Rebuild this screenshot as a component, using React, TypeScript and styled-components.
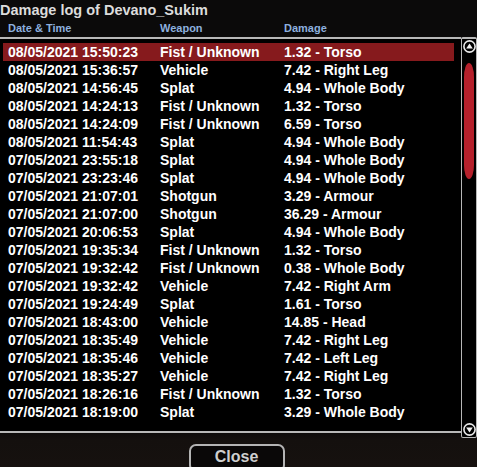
import React from "react";
import styled, { createGlobalStyle } from "styled-components";

const Global = createGlobalStyle`
  html, body { margin: 0; padding: 0; background: #0b0a0a; }
  body { font-family: "Liberation Sans", Arial, sans-serif; }
`;

type Entry = { date: string; weapon: string; damage: string };

const entries: Entry[] = [
  { date: "08/05/2021 15:50:23", weapon: "Fist / Unknown", damage: "1.32 - Torso" },
  { date: "08/05/2021 15:36:57", weapon: "Vehicle", damage: "7.42 - Right Leg" },
  { date: "08/05/2021 14:56:45", weapon: "Splat", damage: "4.94 - Whole Body" },
  { date: "08/05/2021 14:24:13", weapon: "Fist / Unknown", damage: "1.32 - Torso" },
  { date: "08/05/2021 14:24:09", weapon: "Fist / Unknown", damage: "6.59 - Torso" },
  { date: "08/05/2021 11:54:43", weapon: "Splat", damage: "4.94 - Whole Body" },
  { date: "07/05/2021 23:55:18", weapon: "Splat", damage: "4.94 - Whole Body" },
  { date: "07/05/2021 23:23:46", weapon: "Splat", damage: "4.94 - Whole Body" },
  { date: "07/05/2021 21:07:01", weapon: "Shotgun", damage: "3.29 - Armour" },
  { date: "07/05/2021 21:07:00", weapon: "Shotgun", damage: "36.29 - Armour" },
  { date: "07/05/2021 20:06:53", weapon: "Splat", damage: "4.94 - Whole Body" },
  { date: "07/05/2021 19:35:34", weapon: "Fist / Unknown", damage: "1.32 - Torso" },
  { date: "07/05/2021 19:32:42", weapon: "Fist / Unknown", damage: "0.38 - Whole Body" },
  { date: "07/05/2021 19:32:42", weapon: "Vehicle", damage: "7.42 - Right Arm" },
  { date: "07/05/2021 19:24:49", weapon: "Splat", damage: "1.61 - Torso" },
  { date: "07/05/2021 18:43:00", weapon: "Vehicle", damage: "14.85 - Head" },
  { date: "07/05/2021 18:35:49", weapon: "Vehicle", damage: "7.42 - Right Leg" },
  { date: "07/05/2021 18:35:46", weapon: "Vehicle", damage: "7.42 - Left Leg" },
  { date: "07/05/2021 18:35:27", weapon: "Vehicle", damage: "7.42 - Right Leg" },
  { date: "07/05/2021 18:26:16", weapon: "Fist / Unknown", damage: "1.32 - Torso" },
  { date: "07/05/2021 18:19:00", weapon: "Splat", damage: "3.29 - Whole Body" },
];

const Window = styled.div`
  width: 477px;
  height: 467px;
  overflow: hidden;
  display: flex;
  flex-direction: column;
  background: linear-gradient(#0b0a0a 0px, #0b0a0a 430px, #14100e 440px, #16110f 467px);
`;

const Title = styled.div`
  height: 20px;
  line-height: 20px;
  font-size: 14.5px;
  font-weight: bold;
  color: #dcdcdc;
  white-space: nowrap;
`;

const Columns = styled.div`
  display: grid;
  grid-template-columns: 152px 124px 1fr;
  padding-left: 8px;
`;

const HeaderRow = styled(Columns)`
  height: 17px;
  line-height: 17px;
  font-size: 11px;
  font-weight: bold;
  color: #8db0df;
`;

const ListArea = styled.div`
  display: flex;
  height: 398px;
`;

const ListBox = styled.div`
  flex: 1;
  margin-left: -6px;
  height: 396px;
  border: 2px solid #b8b8b8;
  border-right: none;
  border-radius: 4px 0 0 4px;
  background: #000;
  padding: 4px 7px 0 7px;
  box-sizing: border-box;
  overflow: hidden;
`;

const Row = styled(Columns)<{ $selected?: boolean }>`
  height: 18px;
  line-height: 18px;
  padding-left: 5px;
  font-size: 14px;
  font-weight: bold;
  color: #ffffff;
  white-space: nowrap;
  background: ${(p) => (p.$selected ? "#861a1d" : "transparent")};
`;

const ScrollBar = styled.div`
  width: 14px;
  height: 396px;
  border: 1px solid #b8b8b8;
  border-top-width: 2px;
  border-radius: 2px;
  background: #000;
  display: flex;
  flex-direction: column;
  align-items: center;
  justify-content: space-between;
  padding: 1px 0 1px;
`;

const Track = styled.div`
  flex: 1;
  width: 100%;
  display: flex;
  justify-content: center;
  padding-top: 10px;
`;

const Thumb = styled.div`
  width: 10px;
  height: 116px;
  border-radius: 5px / 14px;
  background: #b5202b;
`;

const Footer = styled.div`
  display: flex;
  justify-content: center;
  padding-top: 9px;
  padding-right: 4px;
`;

const CloseButton = styled.button`
  width: 96px;
  height: 28px;
  border: 2px solid #b4b4b4;
  border-radius: 7px;
  background: #0a0808;
  color: #cfcfcf;
  font-family: "Liberation Sans", Arial, sans-serif;
  font-size: 16px;
  font-weight: bold;
  line-height: 20px;
  padding: 0 0 3px;
  cursor: pointer;
`;

function Arrow({ down }: { down?: boolean }) {
  return (
    <svg width="13" height="13" viewBox="0 0 13 13">
      <circle cx="6.5" cy="6.5" r="5.6" fill="#000" stroke="#e8e8e8" strokeWidth="1.6" />
      {down ? (
        <polygon points="3.2,4.6 9.8,4.6 6.5,9.6" fill="#f0f0f0" />
      ) : (
        <polygon points="3.2,8.4 9.8,8.4 6.5,3.4" fill="#f0f0f0" />
      )}
    </svg>
  );
}

export default function App() {
  return (
    <>
      <Global />
      <Window>
        <Title>Damage log of Devano_Sukim</Title>
        <HeaderRow>
          <span>Date &amp; Time</span>
          <span>Weapon</span>
          <span>Damage</span>
        </HeaderRow>
        <ListArea>
          <ListBox>
            {entries.map((e, i) => (
              <Row key={i} $selected={i === 0}>
                <span>{e.date}</span>
                <span>{e.weapon}</span>
                <span>{e.damage}</span>
              </Row>
            ))}
          </ListBox>
          <ScrollBar>
            <Arrow />
            <Track>
              <Thumb />
            </Track>
            <Arrow down />
          </ScrollBar>
        </ListArea>
        <Footer>
          <CloseButton>Close</CloseButton>
        </Footer>
      </Window>
    </>
  );
}
